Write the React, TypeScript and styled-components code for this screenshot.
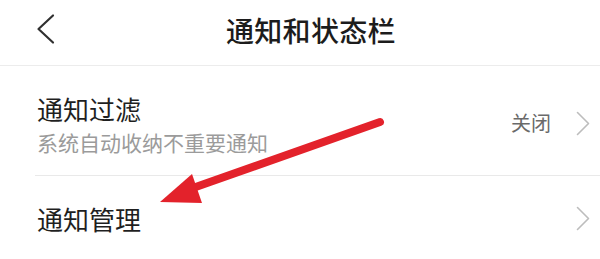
import React from "react";
import styled, { createGlobalStyle } from "styled-components";

const Global = createGlobalStyle`
  html, body { margin: 0; padding: 0; background: #ffffff; }
  body { font-family: "Noto Sans CJK SC", "Noto Sans", sans-serif; -webkit-font-smoothing: antialiased; }
`;

const Page = styled.div`
  position: relative;
  width: 600px;
  height: 259px;
  overflow: hidden;
  background: #ffffff;
`;

const Header = styled.header`
  display: flex;
  align-items: center;
  height: 65px;
  padding-left: 36px;
  border-bottom: 1px solid #ececec;
  box-sizing: content-box;
`;

const BackButton = styled.button`
  display: flex;
  align-items: center;
  justify-content: center;
  width: 19px;
  height: 32px;
  padding: 0;
  margin: 0;
  border: 0;
  background: transparent;
  margin-top: -8px;
`;

const Title = styled.h1`
  margin: 0 0 0 171px;
  font-size: 28px;
  line-height: 28px;
  font-weight: 500;
  color: #1c1c1c;
  letter-spacing: 0.3px;
  margin-top: -6px;
`;

const List = styled.div`
  display: flex;
  flex-direction: column;
`;

const Row = styled.div<{ $last?: boolean }>`
  display: flex;
  align-items: center;
  margin-left: 35px;
  padding: 30px 10px ${(p) => (p.$last ? "27px" : "23px")} 2px;
  border-bottom: ${(p) => (p.$last ? "none" : "1px solid #e9e9e9")};
`;

const Texts = styled.div`
  display: flex;
  flex-direction: column;
  flex: 1;
  gap: 10px;
`;

const RowTitle = styled.div`
  font-size: 26px;
  line-height: 26px;
  color: #1f1f1f;
  font-weight: 400;
`;

const RowSub = styled.div`
  font-size: 21px;
  line-height: 20px;
  color: #9b9b9b;
`;

const Trailing = styled.div`
  display: flex;
  align-items: center;
  gap: 25px;
  align-self: center;
  margin-top: -2px;
`;

const Value = styled.span`
  font-size: 20px;
  line-height: 20px;
  color: #6a6a6a;
`;

const ArrowOverlay = styled.svg`
  position: absolute;
  left: 0;
  top: 0;
  width: 600px;
  height: 259px;
  pointer-events: none;
`;

const Chevron = () => (
  <svg width="14" height="25" viewBox="0 0 14 25" fill="none">
    <polyline points="1.5,1.5 12.5,12.5 1.5,23.5" stroke="#bdbdbd" strokeWidth="1.6" strokeLinejoin="round" strokeLinecap="round" />
  </svg>
);

export default function App() {
  return (
    <>
      <Global />
      <Page>
        <Header>
          <BackButton aria-label="返回">
            <svg width="19" height="32" viewBox="0 0 19 32" fill="none">
              <polyline points="17,2.5 2.5,16 17,29.5" stroke="#303030" strokeWidth="2.2" strokeLinejoin="round" strokeLinecap="round" />
            </svg>
          </BackButton>
          <Title>通知和状态栏</Title>
        </Header>
        <List>
          <Row>
            <Texts>
              <RowTitle>通知过滤</RowTitle>
              <RowSub>系统自动收纳不重要通知</RowSub>
            </Texts>
            <Trailing>
              <Value>关闭</Value>
              <Chevron />
            </Trailing>
          </Row>
          <Row $last>
            <Texts>
              <RowTitle>通知管理</RowTitle>
            </Texts>
            <Trailing>
              <Chevron />
            </Trailing>
          </Row>
        </List>
        <ArrowOverlay viewBox="0 0 600 259">
          <line x1="380" y1="122" x2="190" y2="189" stroke="#e3222b" strokeWidth="8" strokeLinecap="round" />
          <polygon points="160,202 192,174 202,203" fill="#e3222b" />
        </ArrowOverlay>
      </Page>
    </>
  );
}
